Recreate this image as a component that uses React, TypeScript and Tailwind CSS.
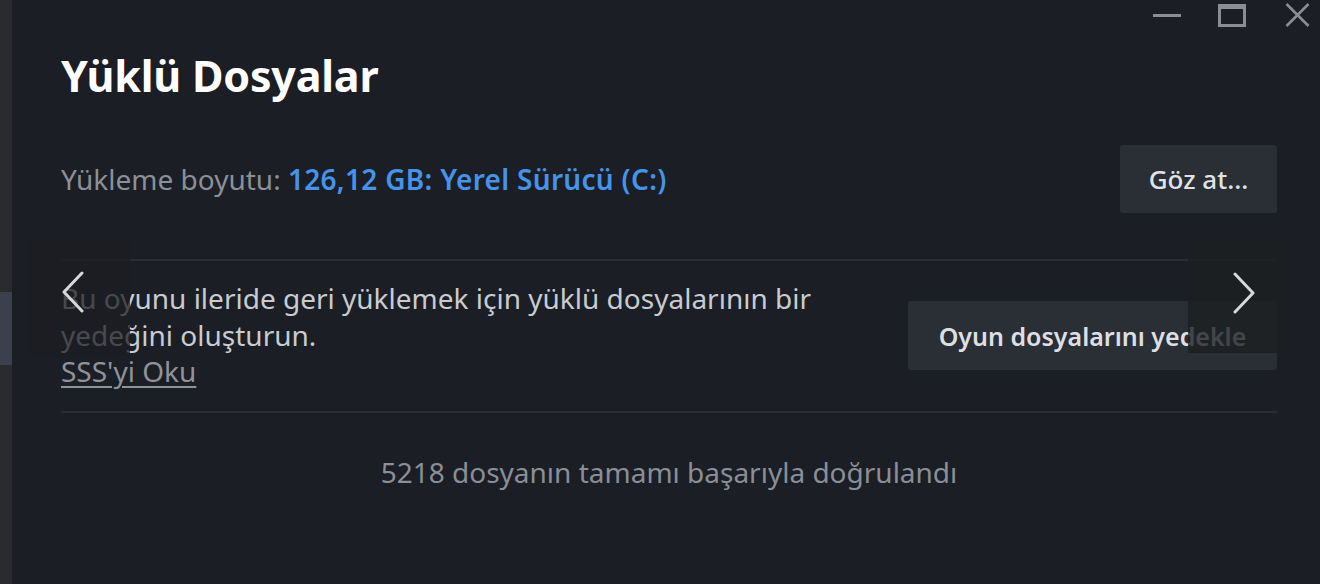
import React from "react";

function Chevron({ dir }: { dir: "left" | "right" }) {
  return (
    <svg width="26" height="42" viewBox="0 0 26 42" fill="none">
      <path
        d={dir === "left" ? "M22 2L4 21L22 40" : "M4 2L22 21L4 40"}
        stroke="#d6d7d9"
        strokeWidth="3"
        strokeLinecap="round"
        strokeLinejoin="round"
      />
    </svg>
  );
}

export default function App() {
  return (
    <div
      className="w-[1320px] h-[584px] flex overflow-hidden bg-[#1b1e24]"
      style={{ fontFamily: "'Noto Sans', 'Open Sans', sans-serif" }}
    >
      {/* left strip of the window behind */}
      <div className="w-[12px] flex flex-col bg-[#2a2b2e]">
        <div className="h-[292px]" />
        <div className="h-[73px] bg-[#3c404c]" />
      </div>

      <div className="relative flex-1 flex flex-col pl-[49px] pr-[43px]">
        {/* window controls */}
        <div className="absolute top-[3px] right-[10px] flex items-center h-[24px]">
          <div className="w-[28px] h-[3px] bg-[#8a8d91]" />
          <div className="ml-[37px] w-[28px] h-[23px] border-[3px] border-t-[5px] border-[#8a8d91]" />
          <svg className="ml-[39px]" width="25" height="24" viewBox="0 0 25 24">
            <path d="M1.5 1L23.5 23M23.5 1L1.5 23" stroke="#8a8d91" strokeWidth="2.6" />
          </svg>
        </div>

        <h1 className="mt-[50px] text-[43px] leading-[52px] font-bold text-white tracking-[-0.2px]">
          Yüklü Dosyalar
        </h1>

        <div className="mt-[43px] flex items-center justify-between">
          <div className="text-[28px] text-[#8b9098]">
            Yükleme boyutu:{" "}
            <span className="text-[#4593ea] font-semibold tracking-[0.3px]">126,12 GB: Yerel Sürücü (C:)</span>
          </div>
          <button className="w-[157px] h-[68px] rounded-[3px] bg-[#2a2e35] text-[26px] text-[#dfe2e6] font-medium">
            Göz at...
          </button>
        </div>

        <div className="mt-[46px] h-[2px] bg-[#2a2e34]" />

        <div className="mt-[19px] flex items-start justify-between">
          <div className="text-[28px] leading-[37px] text-[#c8ccd1]">
            <p>Bu oyunu ileride geri yüklemek için yüklü dosyalarının bir</p>
            <p>yedeğini oluşturun.</p>
            <p className="text-[#8e939a] underline underline-offset-[4px] decoration-[2px] leading-[35px]">SSS'yi Oku</p>
          </div>
          <button className="mt-[21px] w-[369px] h-[69px] pt-[3px] rounded-[3px] bg-[#2a2e35] text-[25px] text-[#dcdfe3] font-semibold">
            Oyun dosyalarını yedekle
          </button>
        </div>

        <div className="mt-[22px] h-[2px] bg-[#2a2e34]" />

        <p className="mt-[39px] text-center text-[28px] leading-[40px] text-[#8a8f97]">
          5218 dosyanın tamamı başarıyla doğrulandı
        </p>

        {/* carousel arrows over content */}
        <div className="absolute left-[16px] top-[240px] w-[102px] h-[116px] bg-[#1c1e21]/75 flex items-start pt-[31px] pl-[32px]">
          <Chevron dir="left" />
        </div>
        <div className="absolute left-[1176px] top-[240px] w-[102px] h-[113px] bg-[#1d1f22]/80 flex items-start pt-[32px] pl-[43px]">
          <Chevron dir="right" />
        </div>
      </div>
    </div>
  );
}
